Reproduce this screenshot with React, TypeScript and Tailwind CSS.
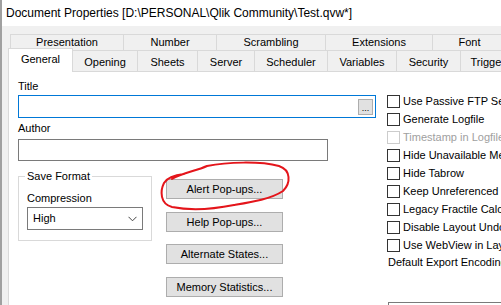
const row1 = [
  { label: "Presentation", w: "w-[114px]" },
  { label: "Number", w: "w-[93px]" },
  { label: "Scrambling", w: "w-[109px]" },
  { label: "Extensions", w: "w-[107px]" },
  { label: "Font", w: "w-[74px]" },
];

const row2 = [
  { label: "Opening", w: "w-[65px]" },
  { label: "Sheets", w: "w-[60px]" },
  { label: "Server", w: "w-[57px]" },
  { label: "Scheduler", w: "w-[73px]" },
  { label: "Variables", w: "w-[69px]" },
  { label: "Security", w: "w-[64px]" },
  { label: "Triggers", w: "w-[60px]" },
];

const checks = [
  { label: "Use Passive FTP Semantics" },
  { label: "Generate Logfile" },
  { label: "Timestamp in Logfile Name", disabled: true },
  { label: "Hide Unavailable Menu Options" },
  { label: "Hide Tabrow" },
  { label: "Keep Unreferenced QVD Buffers" },
  { label: "Legacy Fractile Calculation" },
  { label: "Disable Layout Undo" },
  { label: "Use WebView in Layout" },
];

function Button({ label, className }: { label: string; className?: string }) {
  return (
    <div
      className={`h-[20px] w-[117px] shrink-0 bg-[#e1e1e1] border border-[#adadad] flex items-center justify-center ${className ?? ""}`}
    >
      {label}
    </div>
  );
}

export default function App() {
  return (
    <div className="relative w-[501px] h-[305px] overflow-hidden bg-[#f0f0f0] border-l-2 border-[#a0a0a0] font-['Liberation_Sans',Arial,sans-serif] text-[11px] text-black flex flex-col">
      <div className="h-[26px] shrink-0 bg-white flex items-center pl-[4px] pb-[1px] text-[12px] whitespace-nowrap">
        {"Document Properties [D:\\PERSONAL\\Qlik Community\\Test.qvw*]"}
      </div>

      {/* back row of tabs */}
      <div className="flex shrink-0 mt-[8px] ml-[8px]">
        {row1.map((t, i) => (
          <div
            key={t.label}
            className={`${t.w} shrink-0 h-[16px] border-t border-r border-[#d9d9d9] flex items-center justify-center ${i === 0 ? "border-l" : ""}`}
          >
            {t.label}
          </div>
        ))}
      </div>

      {/* front row of tabs */}
      <div className="relative z-10 shrink-0 flex items-end h-[24px] -mt-[2px] -mb-px ml-[6px]">
        <div className="w-[65px] shrink-0 h-[24px] bg-white border-l border-t border-r border-[#d9d9d9] flex items-center justify-center pb-[2px]">
          General
        </div>
        {row2.map((t) => (
          <div
            key={t.label}
            className={`${t.w} shrink-0 h-[21px] mb-px border-t border-r border-[#d9d9d9] flex items-center justify-center pt-[2px]`}
          >
            {t.label}
          </div>
        ))}
      </div>

      {/* panel */}
      <div className="flex-1 shrink-0 ml-[6px] w-[560px] bg-white border-l border-t border-[#d9d9d9] flex pl-[9px] pt-[7px]">
        <div className="w-[358px] shrink-0 flex flex-col">
          <div className="h-[14px] shrink-0 leading-[14px]">Title</div>
          <div className="mt-[2px] shrink-0 h-[23px] border border-[#0078d7] flex items-center justify-end pr-[2px]">
            <div className="w-[15px] h-[16px] bg-[#e1e1e1] border border-[#adadad] flex items-end justify-center text-[9px] leading-[12px]">
              ...
            </div>
          </div>
          <div className="mt-[3px] shrink-0 h-[14px] leading-[14px]">Author</div>
          <div className="mt-[4px] shrink-0 h-[22px] w-[310px] border border-[#7a7a7a]" />

          <div className="flex shrink-0 mt-[15px]">
            <div className="relative w-[134px] h-[65px] shrink-0 border border-[#d9d9d9] pl-[8px] pt-[14px]">
              <div className="absolute -top-[8px] left-[6px] bg-white px-[2px] leading-[14px]">
                Save Format
              </div>
              <div className="h-[14px] leading-[14px]">Compression</div>
              <div className="mt-[2px] w-[116px] h-[23px] border border-[#7a7a7a] flex items-center justify-between pl-[5px] pr-[5px]">
                <span>High</span>
                <svg width="9" height="6" viewBox="0 0 9 6" fill="none">
                  <path d="M0.5 0.8 L4.5 4.8 L8.5 0.8" stroke="#444" strokeWidth="1" />
                </svg>
              </div>
            </div>
            <div className="ml-[14px] mt-[3px] flex flex-col">
              <Button label="Alert Pop-ups..." />
              <Button label="Help Pop-ups..." className="mt-[13px]" />
              <Button label="Alternate States..." className="mt-[12px]" />
              <Button label="Memory Statistics..." className="mt-[13px]" />
            </div>
          </div>
        </div>

        <div className="ml-[11px] mt-[13px] flex flex-col whitespace-nowrap">
          {checks.map((c) => (
            <div key={c.label} className="h-[18px] shrink-0 flex items-center">
              <div
                className={`w-[13px] h-[13px] bg-white border ${c.disabled ? "border-[#cccccc]" : "border-[#333333]"}`}
              />
              <span className={`ml-[3px] ${c.disabled ? "text-[#a0a0a0]" : ""}`}>{c.label}</span>
            </div>
          ))}
          <div className="mt-[1px] ml-[1px] shrink-0 h-[14px] leading-[14px]">Default Export Encoding</div>
          <div className="mt-[33px] ml-[1px] shrink-0 h-[23px] w-[150px] border border-[#7a7a7a]" />
        </div>
      </div>

      {/* hand drawn highlight */}
      <svg
        className="absolute left-0 top-0 pointer-events-none"
        width="501"
        height="305"
        viewBox="0 0 501 305"
        fill="none"
      >
        <path
          d="M170 179 C180 173 194 171 205 166 C225 162 258 161 277 166 C289 170 289 183 281 191 C269 199 250 202 232 205 C212 209 190 211 170 207 C158 204 158 191 162 183 C165 178 172 175 182 174"
          stroke="#e4151b"
          strokeWidth="2"
          strokeLinecap="round"
        />
      </svg>
    </div>
  );
}
